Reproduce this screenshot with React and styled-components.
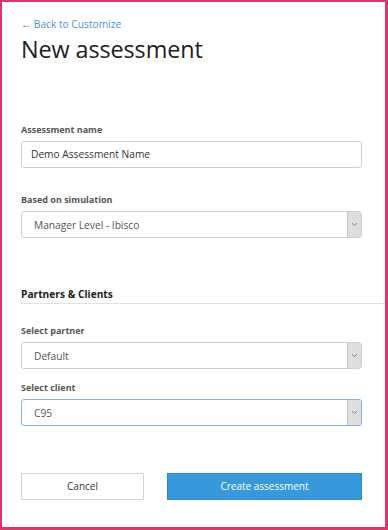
import React from "react";
import styled, { createGlobalStyle } from "styled-components";

const Global = createGlobalStyle`
  html, body { margin: 0; padding: 0; background: #fff; }
  * { box-sizing: border-box; }
  body { font-family: "Open Sans", "Noto Sans", sans-serif; }
`;

const Frame = styled.div`
  width: 388px;
  height: 530px;
  border-style: solid;
  border-color: #e4336a;
  border-width: 2px 3px 3px 2px;
  padding: 15px 23px 0 19px;
  display: flex;
  flex-direction: column;
  overflow: hidden;
`;

const BackLink = styled.a`
  font-size: 10.2px;
  line-height: 14px;
  color: #4a93dc;
  text-decoration: none;
`;

const Title = styled.h1`
  margin: 2px 0 0;
  font-size: 23.4px;
  line-height: 32px;
  font-weight: 400;
  color: #222;
  letter-spacing: -0.1px;
`;

const Field = styled.div`
  display: flex;
  flex-direction: column;
  margin-top: ${(p) => p.$mt}px;
`;

const Label = styled.label`
  font-size: 9px;
  line-height: 13px;
  font-weight: 700;
  color: #555;
  margin-bottom: 5px;
`;

const Input = styled.div`
  height: 27px;
  border: 1px solid #cfcfcf;
  border-radius: 3px;
  padding: 0 9px;
  display: flex;
  align-items: center;
  font-size: 10.2px;
  color: #333;
`;

const Select = styled.div`
  height: 27px;
  border: 1px solid ${(p) => (p.$focused ? "#7db6e6" : "#cfcfcf")};
  border-radius: 3px;
  display: flex;
  align-items: stretch;
  font-size: 10.2px;
  color: #555;
`;

const SelectValue = styled.div`
  flex: 1;
  display: flex;
  align-items: center;
  padding-left: 12px;
`;

const Arrow = styled.div`
  width: 14px;
  background: #dedede;
  border-left: 1px solid #c4c4c4;
  border-radius: 0 2px 2px 0;
  display: flex;
  align-items: center;
  justify-content: center;
`;

const SectionTitle = styled.h2`
  margin: 49px -23px 0 0;
  font-size: 10.2px;
  line-height: 15px;
  font-weight: 700;
  color: #222;
  padding-bottom: 1px;
  border-bottom: 1px solid #e2e2e2;
`;

const Actions = styled.div`
  margin-top: 46.5px;
  display: flex;
  gap: 23px;
`;

const Button = styled.button`
  height: 27px;
  font-family: inherit;
  font-size: 10px;
  border-radius: 0;
  cursor: pointer;
  width: ${(p) => (p.$primary ? "195px" : "123px")};
  background: ${(p) => (p.$primary ? "#3799dc" : "#fff")};
  color: ${(p) => (p.$primary ? "#fff" : "#333")};
  border: 1px solid ${(p) => (p.$primary ? "#2a88cc" : "#d4d4d4")};
`;

const Chevron = () => (
  <svg width="7" height="5" viewBox="0 0 7 5">
    <path d="M1 1.2 L3.5 3.6 L6 1.2" fill="none" stroke="#777" strokeWidth="0.9" />
  </svg>
);

const Dropdown = ({ value, focused }) => (
  <Select $focused={focused}>
    <SelectValue>{value}</SelectValue>
    <Arrow>
      <Chevron />
    </Arrow>
  </Select>
);

export default function App() {
  return (
    <>
      <Global />
      <Frame>
        <BackLink href="#">← Back to Customize</BackLink>
        <Title>New assessment</Title>
        <Field $mt={57.5}>
          <Label>Assessment name</Label>
          <Input>Demo Assessment Name</Input>
        </Field>
        <Field $mt={25.5}>
          <Label>Based on simulation</Label>
          <Dropdown value="Manager Level - Ibisco" />
        </Field>
        <SectionTitle>Partners &amp; Clients</SectionTitle>
        <Field $mt={20}>
          <Label>Select partner</Label>
          <Dropdown value="Default" />
        </Field>
        <Field $mt={12}>
          <Label>Select client</Label>
          <Dropdown value="C95" focused />
        </Field>
        <Actions>
          <Button>Cancel</Button>
          <Button $primary>Create assessment</Button>
        </Actions>
      </Frame>
    </>
  );
}
